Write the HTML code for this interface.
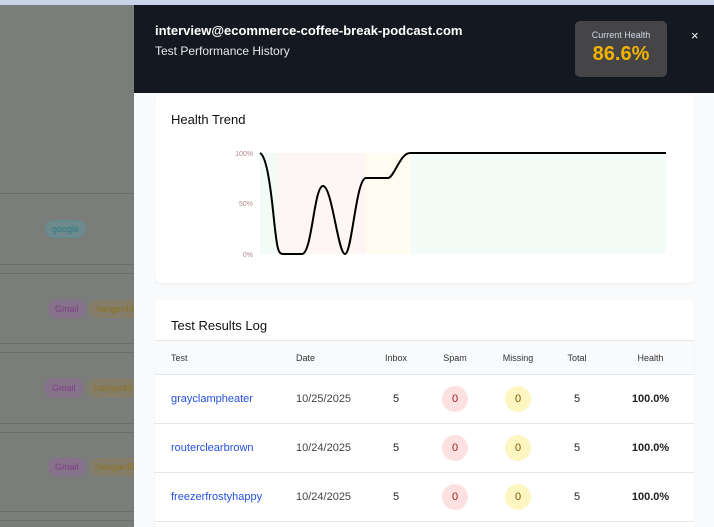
<!DOCTYPE html>
<html><head><meta charset="utf-8"><style>
*{box-sizing:border-box;margin:0;padding:0}
body{width:714px;height:527px;overflow:hidden;font-family:"Liberation Sans",sans-serif;background:#7b7d7b;position:relative}
.topbar{position:absolute;left:0;top:0;width:714px;height:5px;background:#c9d4ea}
.ln{position:absolute;left:0;width:134px;height:1px;background:#6c6e6c}
.pill{position:absolute;height:18px;border-radius:9px;font-size:9px;line-height:16px;padding:0 6px;border:1px solid}
.g{color:#7c3f86;background:#86728a;border-color:#8c6c93}
.h{color:#8b7320;background:#837d6a;border-color:#8c8060}
.panel{position:absolute;left:134px;top:5px;width:580px;height:522px;background:#f8fafc;overflow:hidden}
.hdr{position:absolute;left:0;top:0;width:580px;height:88px;background:#141820}
.card{position:absolute;background:#fff;border-radius:6px;box-shadow:0 1px 2px rgba(0,0,0,.06)}
table{table-layout:fixed}
th{font-weight:normal;font-size:9px;color:#333;height:34px;background:#f8fafc}
td{font-size:11px;color:#222;height:49px;border-top:1px solid #e4e6ea;text-align:center}
.b{display:inline-block;width:26px;height:26px;border-radius:13px;line-height:26px}
</style></head><body>
<div class="topbar"></div>
<div class="ln" style="top:193px"></div>
<div class="pill" style="left:45px;top:220px;color:#2b7b86;background:#6f8a8d;border-color:#5f8b90">google</div>
<div class="ln" style="top:264px"></div><div class="ln" style="top:273px"></div>
<div class="pill g" style="left:48px;top:300px">Gmail</div><div class="pill h" style="left:89px;top:300px">hangar49</div>
<div class="ln" style="top:343px"></div><div class="ln" style="top:352px"></div>
<div class="pill g" style="left:45px;top:379px">Gmail</div><div class="pill h" style="left:87px;top:379px">hangar49</div>
<div class="ln" style="top:423px"></div><div class="ln" style="top:432px"></div>
<div class="pill g" style="left:48px;top:458px">Gmail</div><div class="pill h" style="left:90px;top:458px">hangar49</div>
<div class="ln" style="top:511px"></div><div class="ln" style="top:520px"></div>
<div class="panel">
<div class="hdr">
<div style="position:absolute;left:21px;top:18px;color:#fff;font-weight:bold;font-size:13px">interview@ecommerce-coffee-break-podcast.com</div>
<div style="position:absolute;left:21px;top:39px;color:#e5e7eb;font-size:12px">Test Performance History</div>
<div style="position:absolute;left:441px;top:16px;width:92px;height:56px;background:#454547;border-radius:5px;text-align:center">
<div style="color:#cfd8e6;font-size:9px;margin-top:9px">Current Health</div>
<div style="color:#f2b300;font-size:20px;font-weight:bold;margin-top:3px">86.6%</div></div>
<div style="position:absolute;left:557px;top:23px;color:#fff;font-size:13px">×</div>
</div>
<div class="card" style="left:21px;top:90px;width:539px;height:188px">
<div style="position:absolute;left:16px;top:17px;font-size:13px;color:#111">Health Trend</div>
</div>
<svg style="position:absolute;left:0;top:0" width="580" height="300">
<g transform="translate(-134,-5)">
<rect x="260" y="153" width="18" height="101" fill="#f2fbf5"/>
<rect x="278" y="153" width="88" height="101" fill="#fef6f5"/>
<rect x="366" y="153" width="44" height="101" fill="#fffcf1"/>
<rect x="410" y="153" width="256" height="101" fill="#f4fcf7"/>
<text x="253" y="156" font-size="7" fill="#b08a8a" text-anchor="end" font-family="Liberation Sans">100%</text>
<text x="253" y="206" font-size="7" fill="#b08a8a" text-anchor="end" font-family="Liberation Sans">50%</text>
<text x="253" y="257" font-size="7" fill="#b08a8a" text-anchor="end" font-family="Liberation Sans">0%</text>
<path d="M260 153 C266 156,270 180,274 220 C277 248,278 254,283 254 L302 254 C312 254,314 186,323 186 C332 186,338 254,345 254 C352 254,356 178,366 178 L388 178 C394 178,400 153,410 153 L666 153" fill="none" stroke="#000" stroke-width="2"/>
</g></svg>
<div class="card" style="left:21px;top:295px;width:539px;height:240px;overflow:hidden">
<div style="position:absolute;left:16px;top:18px;font-size:13px;color:#111">Test Results Log</div>
<table style="position:absolute;left:0;top:40px;width:539px;border-collapse:collapse;border-top:1px solid #e4e6ea">
<colgroup><col style="width:141px"><col style="width:75px"><col style="width:50px"><col style="width:68px"><col style="width:58px"><col style="width:60px"><col style="width:87px"></colgroup>
<tr><th style="text-align:left;padding-left:16px">Test</th><th style="text-align:left">Date</th><th>Inbox</th><th>Spam</th><th>Missing</th><th>Total</th><th>Health</th></tr>
<tr><td style="text-align:left;padding-left:16px;color:#2550e0">grayclampheater</td><td style="text-align:left;color:#444">10/25/2025</td><td>5</td><td><span class="b" style="background:#fde0e0;color:#9b1c1c">0</span></td><td><span class="b" style="background:#fdf6c0;color:#7a5a00">0</span></td><td>5</td><td style="font-weight:bold">100.0%</td></tr>
<tr><td style="text-align:left;padding-left:16px;color:#2550e0">routerclearbrown</td><td style="text-align:left;color:#444">10/24/2025</td><td>5</td><td><span class="b" style="background:#fde0e0;color:#9b1c1c">0</span></td><td><span class="b" style="background:#fdf6c0;color:#7a5a00">0</span></td><td>5</td><td style="font-weight:bold">100.0%</td></tr>
<tr><td style="text-align:left;padding-left:16px;color:#2550e0">freezerfrostyhappy</td><td style="text-align:left;color:#444">10/24/2025</td><td>5</td><td><span class="b" style="background:#fde0e0;color:#9b1c1c">0</span></td><td><span class="b" style="background:#fdf6c0;color:#7a5a00">0</span></td><td>5</td><td style="font-weight:bold">100.0%</td></tr>
<tr><td colspan="7"></td></tr>
</table></div>
</div>
</body></html>
